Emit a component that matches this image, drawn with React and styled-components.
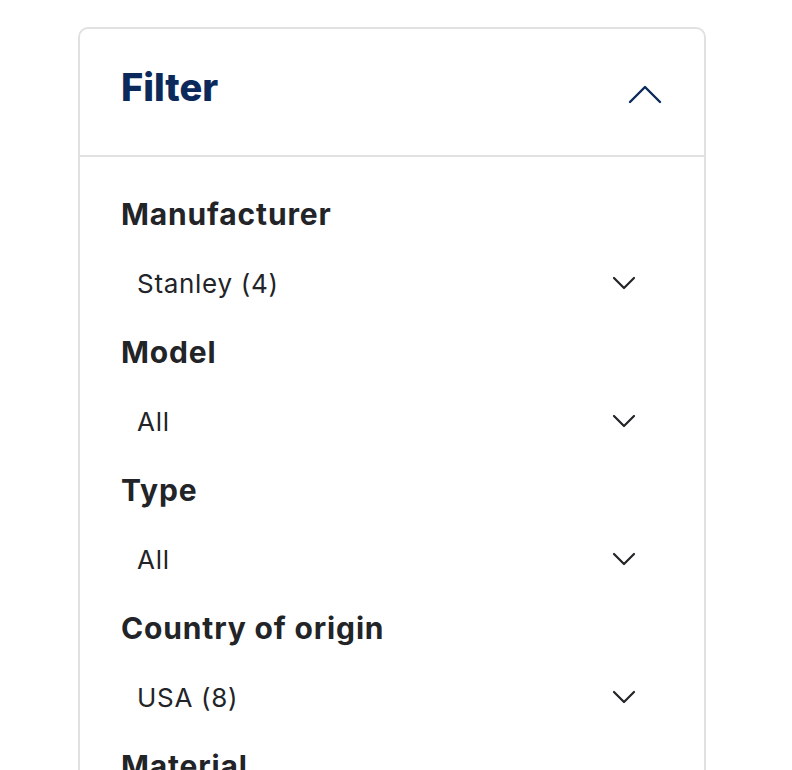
import styled, { createGlobalStyle } from 'styled-components';

const GlobalStyle = createGlobalStyle`
  body {
    margin: 0;
    background: #ffffff;
    font-family: 'Inter', 'Roboto', sans-serif;
  }
`;

const filters = [
    { label: 'Manufacturer', value: 'Stanley (4)' },
    { label: 'Model', value: 'All' },
    { label: 'Type', value: 'All' },
    { label: 'Country of origin', value: 'USA (8)' },
    { label: 'Material', value: 'All' },
];

function ChevronUp() {
    return (
        <svg width="34" height="20" viewBox="0 0 34 20" fill="none">
            <path d="M2 18 L17 3 L32 18" stroke="#0b2a5b" strokeWidth="2.4" strokeLinecap="round" strokeLinejoin="round" />
        </svg>
    );
}

function ChevronDown() {
    return (
        <svg width="24" height="14" viewBox="0 0 24 14" fill="none">
            <path d="M2 2 L12 12 L22 2" stroke="#222428" strokeWidth="2.2" strokeLinecap="round" strokeLinejoin="round" />
        </svg>
    );
}

function App() {
    return (
        <>
            <GlobalStyle />
            <Page>
                <Card>
                    <Header>
                        <Title>Filter</Title>
                        <ToggleButton aria-label="Collapse filter">
                            <ChevronUp />
                        </ToggleButton>
                    </Header>
                    <Body>
                        {filters.map(f => (
                            <Group key={f.label}>
                                <Label>{f.label}</Label>
                                <Select>
                                    <SelectValue>{f.value}</SelectValue>
                                    <ChevronDown />
                                </Select>
                            </Group>
                        ))}
                    </Body>
                </Card>
            </Page>
        </>
    );
}

const Page = styled.div`
  height: 770px;
  overflow: hidden;
`;

const Card = styled.div`
  margin: 27px 0 0 78px;
  width: 628px;
  border: 2px solid #e1e1e1;
  border-radius: 10px;
  box-sizing: border-box;
  overflow: hidden;
`;

const Header = styled.div`
  display: flex;
  align-items: center;
  justify-content: space-between;
  height: 128px;
  padding: 0 42px 0 41px;
  border-bottom: 2px solid #e1e1e1;
  box-sizing: border-box;
`;

const Title = styled.h2`
  margin: 0 0 10px;
  font-size: 38px;
  font-weight: 800;
  color: #0b2a5b;
`;

const ToggleButton = styled.button`
  display: flex;
  align-items: center;
  justify-content: center;
  padding: 0;
  border: none;
  background: none;
  margin-top: 4px;
  cursor: pointer;
`;

const Body = styled.div`
  padding: 39px 41px 0;
`;

const Group = styled.div`
  display: flex;
  flex-direction: column;
`;

const Label = styled.div`
  font-size: 30px;
  line-height: 36px;
  font-weight: 700;
  letter-spacing: 0.85px;
  color: #222428;
  margin-bottom: 27px;
`;

const Select = styled.div`
  display: flex;
  align-items: center;
  justify-content: space-between;
  height: 48px;
  padding: 0 27px 0 16px;
  margin-bottom: 27px;
  cursor: pointer;
`;

const SelectValue = styled.span`
  font-size: 26px;
  letter-spacing: 0.7px;
  color: #222428;
`;

export default App;
